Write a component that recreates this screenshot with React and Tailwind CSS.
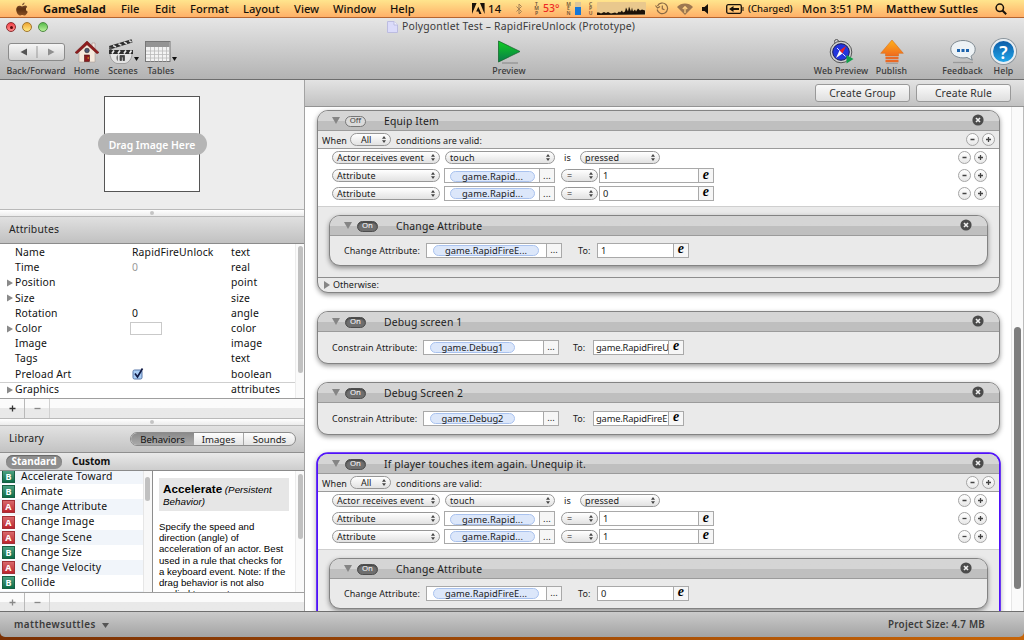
import clsx from "clsx";

const menus = [
  { label: "GameSalad", style: "w-[78px] font-bold tracking-[0.05px]" },
  { label: "File", style: "w-[34px]" },
  { label: "Edit", style: "w-[35px]" },
  { label: "Format", style: "w-[53px]" },
  { label: "Layout", style: "w-[51px]" },
  { label: "View", style: "w-[39px]" },
  { label: "Window", style: "w-[57px]" },
  { label: "Help", style: "w-[82px]" },
];

const attributes = [
  { name: "Name", value: "RapidFireUnlock", type: "text" },
  { name: "Time", value: "0", type: "real", muted: true },
  { name: "Position", type: "point", expandable: true },
  { name: "Size", type: "size", expandable: true },
  { name: "Rotation", value: "0", type: "angle" },
  { name: "Color", type: "color", expandable: true, swatch: true },
  { name: "Image", type: "image" },
  { name: "Tags", type: "text" },
  { name: "Preload Art", type: "boolean", checked: true },
  { name: "Graphics", type: "attributes", expandable: true },
];

const behaviors = [
  { kind: "B", name: "Accelerate Toward" },
  { kind: "B", name: "Animate" },
  { kind: "A", name: "Change Attribute" },
  { kind: "A", name: "Change Image" },
  { kind: "A", name: "Change Scene" },
  { kind: "B", name: "Change Size" },
  { kind: "A", name: "Change Velocity" },
  { kind: "B", name: "Collide" },
  { kind: "B", name: "Constrain Attribute" },
];

function Meter({ letters, style }) {
  return (
    <span className={clsx("flex w-[5px] shrink-0 flex-col items-center text-[5px] font-semibold leading-[4.500px] text-[#6b5238]", style)}>
      {letters.map((l) => (
        <span key={l}>{l}</span>
      ))}
    </span>
  );
}

function MenuBar() {
  return (
    <div className="flex h-[18px] shrink-0 items-center border-b border-[#b5652f] bg-linear-to-b from-[#ffe58d] to-[#ffb068] text-[11.2px] font-medium leading-none text-[#17110a]">
      <svg width="14" height="14" viewBox="0 0 14 14" className="ml-[15px] mr-[14px] shrink-0">
        <defs>
          <linearGradient id="apple" x1="0" y1="0" x2="0" y2="1">
            <stop offset="0" stopColor="#8a6040" />
            <stop offset="0.5" stopColor="#5c3010" />
            <stop offset="1" stopColor="#8b5022" />
          </linearGradient>
        </defs>
        <path
          d="M9.600.500c.1 1.400-1.100 2.800-2.500 2.800C7 2 8.200.700 9.600.500zM12.200 5c-1.900 1.200-1.700 3.700.5 4.700-.6 1.900-1.900 3.800-3.200 3.800-.9 0-1.300-.5-2.300-.5s-1.500.5-2.300.5C3 13.500 1.200 10.200 1.200 7.600c0-2.400 1.500-3.900 3.200-3.900 1.100 0 1.900.7 2.700.7.7 0 1.700-.8 3-.8.8 0 1.600.5 2.100 1.400z"
          fill="url(#apple)"
        />
      </svg>
      {menus.map((m) => (
        <span key={m.label} className={clsx("shrink-0 whitespace-nowrap", m.style)}>
          {m.label}
        </span>
      ))}
      <svg width="13" height="11" viewBox="0 0 13 11" className="shrink-0">
        <path d="M0 0h4.600L0 11zM8 0h4.600v11zM6.300 3.800L9.500 11H7.300L6.400 8.600H4.200z" fill="#17110a" />
      </svg>
      <span className="ml-[3px] w-[26px] tracking-[0.3px]">14</span>
      <svg width="8" height="12" viewBox="0 0 8 12" className="ml-px shrink-0">
        <path d="M1.500 3.500l5 5L4 11V1l2.500 2.500-5 5" fill="none" stroke="#a58356" strokeWidth="1" />
      </svg>
      <Meter letters={["T", "M", "P"]} style="ml-[11px]" />
      <span className="ml-[4px] w-[19px] shrink-0 text-[10.500px] text-[#ed2b24]">53°</span>
      <Meter letters={["M", "E", "N"]} style="ml-[4px]" />
      <span className="ml-[4px] flex h-[13px] w-[6px] shrink-0 flex-col justify-end bg-[#dcc597]">
        <span className="h-[8px] bg-[#1577d8]" />
      </span>
      <Meter letters={["C", "P", "U"]} style="ml-[7px]" />
      <svg width="49" height="13" viewBox="0 0 49 13" className="ml-[4px] shrink-0">
        <rect width="49" height="13" rx="1" fill="#e9c88d" />
        <path
          d="M0 13v-2.500l2 0 2 1 3-1.500 2 1 2-1 3 1.500 4-1 2 1 2-2 1 1 2-2 1 2 2-1 1-4 2 4 1-5 2 5 1-4 1 4 2-2 1 2 2-3 2 2 2-1 3 1v4z"
          fill="#1c1208"
        />
      </svg>
      <svg width="14" height="13" viewBox="0 0 14 13" className="ml-[9px] shrink-0">
        <path d="M2.500 4a5.300 5.300 0 1 1-.4 3.500M.5 3.500l2 2.500 2.600-1.500M7.300 3.500v3.300l2.200 1" fill="none" stroke="#8a6a45" strokeWidth="1.200" />
      </svg>
      <svg width="16" height="12" viewBox="0 0 16 12" className="ml-[8px] shrink-0">
        <path d="M0 4c4.500-4.600 11.500-4.600 16 0l-8 8z" fill="#9c7750" />
        <path d="M8 10V4M5.800 6L8 3.600 10.200 6" fill="none" stroke="#ffd284" strokeWidth="1.300" />
      </svg>
      <svg width="7" height="10" viewBox="0 0 7 10" className="ml-[9px] shrink-0">
        <path d="M6 0v10L2.500 7H0V3h2.500z" fill="#17110a" />
      </svg>
      <svg width="18" height="10" viewBox="0 0 18 10" className="ml-[17px] shrink-0">
        <rect x=".7" y=".7" width="14.600" height="8.600" rx="1.500" fill="none" stroke="#17110a" strokeWidth="1.300" />
        <path d="M16.500 3h1v4h-1zM3 5l4.500-3v2H13v2H7.500v2z" fill="#17110a" />
      </svg>
      <span className="ml-[4px] w-[54px] shrink-0 whitespace-nowrap text-[9.500px]">(Charged)</span>
      <span className="w-[84px] shrink-0 whitespace-nowrap tracking-[0.15px]">Mon 3:51 PM</span>
      <span className="w-[109px] shrink-0 whitespace-nowrap font-semibold tracking-[0.2px]">Matthew Suttles</span>
      <svg width="12" height="12" viewBox="0 0 12 12" className="shrink-0">
        <circle cx="4.800" cy="4.800" r="3.700" fill="none" stroke="#17110a" strokeWidth="1.500" />
        <path d="M7.500 7.500l3.700 3.700" stroke="#17110a" strokeWidth="2" />
      </svg>
    </div>
  );
}

function HomeIcon() {
  return (
    <svg width="24" height="24" viewBox="0 0 24 24">
      <path d="M4 11l8-8 8 8v11H4z" fill="#f5e9dc" stroke="#a39388" strokeWidth=".5" />
      <path d="M17 3h3v6l-3-3z" fill="#f1e7e2" stroke="#a2837d" strokeWidth=".5" />
      <path d="M0 12.500L12 1l12 11.500-2 1.200L12 4.800 2 13.700z" fill="#8e1b1d" stroke="#61100f" strokeWidth=".5" />
      <circle cx="12" cy="10.500" r="2.300" fill="#4b5572" stroke="#222" strokeWidth=".6" />
      <rect x="9.500" y="15" width="5" height="6.500" fill="#8e1b1d" stroke="#4d0d0d" strokeWidth=".6" />
      <circle cx="13.200" cy="18" r=".7" fill="#edc229" />
    </svg>
  );
}

function ScenesIcon() {
  return (
    <svg width="26" height="26" viewBox="0 0 26 26">
      <path d="M2 14.500h22c0 5-3 9-7 10H9c-4-1-7-5-7-10z" fill="#e4e4e4" stroke="#8a8a8a" strokeWidth=".7" />
      <path d="M9.500 16.500c-.8 1.500-.5 3.500 0 5M12 16.500h4.500v5h-1.500v-3.500h-1.500v3.500H12z" fill="#444" stroke="#444" strokeWidth=".8" />
      <path d="M1 7L23.500.300l1 3.200L2 10.500z" fill="#2d2d2d" />
      <path d="M5 6.500l3 1.500M10.500 4.800l3 1.600M16 3.100l3 1.600M21 1.600l2.500 1.400" stroke="#ddd" strokeWidth="1.600" />
      <path d="M1 11h24v4H1z" fill="#2d2d2d" />
      <path d="M6 11.500l-2 3M12 11.500l-2 3M18 11.500l-2 3M23.500 11.500l-2 3" stroke="#eee" strokeWidth="1.700" />
      <circle cx="2.500" cy="9.500" r="1.500" fill="#555" />
    </svg>
  );
}

function TablesIcon() {
  return (
    <svg width="26" height="21" viewBox="0 0 26 21">
      <rect x=".5" y=".5" width="24.500" height="20" fill="#f3f3f3" stroke="#777" />
      <rect x="1" y="1" width="23.500" height="5" fill="#949494" />
      <path d="M1 10h24M1 13.500h24M1 17h24M5.500 6v14.500M9.500 6v14.500M13.500 6v14.500M17.500 6v14.500M21.500 6v14.500" stroke="#b9b9b9" strokeWidth=".8" />
    </svg>
  );
}

function CompassIcon() {
  return (
    <svg width="25" height="25" viewBox="0 0 25 25">
      <circle cx="7.500" cy="2.500" r="2" fill="none" stroke="#555" />
      <circle cx="12" cy="13" r="10.800" fill="#cfcfcf" stroke="#555" />
      <circle cx="12" cy="13" r="8.300" fill="#2335dd" stroke="#171b57" />
      <path d="M17 7l-3.500 7.500-3-3z" fill="#ee2222" />
      <path d="M7 19l3.500-7.500 3 3z" fill="#fff" />
      <path d="M8 9l2.500 2.500M16.500 17.500L13.500 14.500" stroke="#dfe4ff" />
      <path d="M17.500 16l7 4-7 4.500z" fill="#12a04a" />
    </svg>
  );
}

function PublishIcon() {
  return (
    <svg width="24" height="25" viewBox="0 0 24 25">
      <defs>
        <linearGradient id="publish" x1="0" y1="0" x2="0" y2="1">
          <stop offset="0" stopColor="#ffb21c" />
          <stop offset="1" stopColor="#f06a1d" />
        </linearGradient>
      </defs>
      <path d="M12 1l11.300 13.300H18.500V17h-13v-2.700H.700z" fill="url(#publish)" stroke="#d8701c" strokeWidth=".6" />
      <path d="M5.500 18h13v2.200h-13zM5.500 21h13v2.200h-13z" fill="#ea6a26" />
      <path d="M6 24.300h12" stroke="#999" />
    </svg>
  );
}

function FeedbackIcon() {
  return (
    <svg width="26" height="25" viewBox="0 0 26 25">
      <path d="M3 23.500h20" stroke="#9a9a9a" strokeWidth="1.300" />
      <path
        d="M13 1.500c7 0 12.200 3.700 12.200 8.700 0 3.200-1.700 5.500-4.200 7l1.300 4-5.300-2.700c-1.300.3-2.600.4-4 .4C6 18.900.800 15.200.800 10.200S6 1.500 13 1.500z"
        fill="#edf2f5"
        stroke="#7f8a92"
      />
      <path d="M7 10h3v3H7zM11.500 10h3v3h-3zM16 10h3v3h-3z" fill="#1b63ae" />
    </svg>
  );
}

function HelpIcon() {
  return (
    <div className="flex size-[25px] items-center justify-center rounded-full border-2 border-[#e8eef3] bg-linear-to-b from-[#0f5da8] to-[#20a5e8] text-[18px] font-semibold leading-none text-white shadow-[0_0_0_1px_#8b969e]">
      ?
    </div>
  );
}

function ToolItem({ label, style, children }) {
  return (
    <div className={clsx("flex shrink-0 flex-col items-center", style)}>
      <div className="flex h-[27px] items-center justify-center">{children}</div>
      <span className="whitespace-nowrap text-[8.800px] leading-[12px] tracking-[0.080px]">{label}</span>
    </div>
  );
}

function Caret() {
  return (
    <svg width="5" height="4" viewBox="0 0 5 4" className="mt-[14px] shrink-0">
      <path d="M0 0h5L2.500 4z" fill="#111" />
    </svg>
  );
}

function WindowHeader() {
  return (
    <div className="flex h-[62px] shrink-0 flex-col border-b border-[#6d6d6d] bg-linear-to-b from-[#e6e6e6] to-[#b3b3b3] font-medium text-[#3a3a3a]">
      <div className="flex h-[18px] items-center">
        <div className="ml-[6px] flex w-[380px] shrink-0 gap-[6px]">
          <span className="flex size-[10px] items-center justify-center rounded-full border border-[#8c2c2f] bg-linear-to-b from-[#f23c46] to-[#ff8b8b]">
            <span className="size-[3px] rounded-full bg-[#5e0609]" />
          </span>
          <span className="size-[10px] rounded-full border border-[#a1752b] bg-linear-to-b from-[#eea52d] to-[#ffeb84]" />
          <span className="size-[10px] rounded-full border border-[#4f8a43] bg-linear-to-b from-[#57bb4a] to-[#b8f299]" />
        </div>
        <svg width="11" height="12" viewBox="0 0 11 12" className="ml-[1px] shrink-0">
          <path d="M.5.500h6.500l3.500 3.500v7.500H.500z" fill="#dbdbfa" stroke="#bcbce0" />
          <path d="M7 .500v3.500h3.500" fill="#f2f2ff" stroke="#bcbce0" />
        </svg>
        <span className="ml-[4px] whitespace-nowrap text-[10.400px] font-normal tracking-[0.180px]">
          Polygontlet Test – RapidFireUnlock (Prototype)
        </span>
      </div>
      <div className="flex pt-[2px]">
        <ToolItem label="Back/Forward" style="ml-[7px] w-[58px]">
          <div className="flex h-[18px] w-[57px] items-center rounded-[3px] border border-[#8b8b8b] bg-linear-to-b from-[#f5f5f5] to-[#d2d2d2]">
            <svg width="55" height="16" viewBox="0 0 55 16">
              <path d="M18 4.500v7L11.500 8z" fill="#555" />
              <path d="M28 2v12" stroke="#999" />
              <path d="M39 4.500v7L45.500 8z" fill="#8f8f8f" />
            </svg>
          </div>
        </ToolItem>
        <ToolItem label="Home" style="ml-[9px] w-[25px]">
          <HomeIcon />
        </ToolItem>
        <ToolItem label="Scenes" style="ml-[9px] w-[30px]">
          <div className="ml-[1px] flex items-center">
            <ScenesIcon />
            <Caret />
          </div>
        </ToolItem>
        <ToolItem label="Tables" style="ml-[8px] w-[30px]">
          <div className="flex items-center gap-px">
            <TablesIcon />
            <Caret />
          </div>
        </ToolItem>
        <ToolItem label="Preview" style="ml-[316px] w-[34px]">
          <svg width="24" height="24" viewBox="0 0 24 24">
            <defs>
              <linearGradient id="play" x1="0" y1="0" x2="0" y2="1">
                <stop offset="0" stopColor="#10cf20" />
                <stop offset="1" stopColor="#087a4b" />
              </linearGradient>
            </defs>
            <path d="M5 23h16" stroke="#999" strokeWidth="1.500" />
            <path d="M1.500 1v21L23 11.500z" fill="url(#play)" stroke="#176a2e" strokeWidth=".8" />
          </svg>
        </ToolItem>
        <ToolItem label="Web Preview" style="ml-[288px] w-[54px]">
          <CompassIcon />
        </ToolItem>
        <ToolItem label="Publish" style="ml-[8px] w-[31px]">
          <PublishIcon />
        </ToolItem>
        <ToolItem label="Feedback" style="ml-[36px] w-[39px]">
          <FeedbackIcon />
        </ToolItem>
        <ToolItem label="Help" style="ml-[9px] w-[25px]">
          <HelpIcon />
        </ToolItem>
      </div>
    </div>
  );
}

function Splitter() {
  return (
    <div className="flex h-[8px] shrink-0 items-center justify-center border-y border-[#b9b9b9] bg-linear-to-b from-white to-[#ececec]">
      <span className="size-[4px] rounded-full bg-[#c4c4c4]" />
    </div>
  );
}

function AddRemoveBar({ style }) {
  return (
    <div className={clsx("flex shrink-0 border-t border-[#9f9f9f] bg-linear-to-b from-[#fbfbfb] from-50% to-[#e9e9e9] to-50%", style)}>
      <span className="flex w-[25px] items-center justify-center border-r border-[#b9b9b9]">
        <svg width="7" height="7" viewBox="0 0 7 7">
          <path d="M3.500.500v6M.500 3.500h6" stroke="currentColor" strokeWidth="1.300" />
        </svg>
      </span>
      <span className="flex w-[25px] items-center justify-center border-r border-[#d0d0d0]">
        <svg width="7" height="7" viewBox="0 0 7 7">
          <path d="M.500 3.500h6" stroke="#888" strokeWidth="1.300" />
        </svg>
      </span>
    </div>
  );
}

function AttributeTable() {
  return (
    <div className="flex h-[154px] shrink-0 bg-white">
      <div className="flex-1 pt-[1px] text-[10.400px] leading-[15.200px] tracking-[0.150px] text-[#111]">
        {attributes.map((a) => (
          <div key={a.name} className={clsx("flex h-[15.200px] items-center", a.name === "Graphics" && "border-t border-[#cfcfcf]")}>
            <span className="flex w-[15px] shrink-0 justify-end pr-[2px]">
              {a.expandable && (
                <svg width="6" height="8" viewBox="0 0 6 8">
                  <path d="M0 .500v7L6 4z" fill="#8a8a8a" />
                </svg>
              )}
            </span>
            <span className="w-[117px] shrink-0">{a.name}</span>
            <span className={clsx("w-[99px] shrink-0 whitespace-nowrap", a.muted && "text-[#999]")}>
              {a.value}
              {a.swatch && <span className="-ml-[2px] block h-[13px] w-[32px] border border-[#c9c9c9] bg-white" />}
              {a.checked && (
                <svg width="12" height="13" viewBox="0 0 12 13" className="mb-[2px]">
                  <rect x="1" y="3" width="9" height="9" rx="1.500" fill="#a9cdf5" stroke="#5877a8" />
                  <path d="M3 6.500l2.500 3.500L10.500 1.500" fill="none" stroke="#101a45" strokeWidth="1.700" />
                </svg>
              )}
            </span>
            <span>{a.type}</span>
          </div>
        ))}
      </div>
      <div className="w-[9px] border-l border-[#ececec] bg-[#fafafa] pl-[2px] pt-[2px]">
        <div className="h-[127px] w-[5px] rounded-full bg-[#c1c1c1]" />
      </div>
    </div>
  );
}

function Library() {
  return (
    <>
      <div className="flex h-[27px] shrink-0 items-center border-b border-[#8f8f8f] bg-linear-to-b from-[#e2e2e2] to-[#c3c3c3] text-[10.400px] text-[#222]">
        <span className="ml-[9px] w-[121px] tracking-[0.150px]">Library</span>
        <div className="flex h-[14px] w-[166px] overflow-hidden rounded-full border border-[#8c8c8c] bg-linear-to-b from-[#fdfdfd] to-[#e4e4e4] text-[9.600px] leading-[13px]">
          <span className="w-[63px] bg-linear-to-b from-[#8b8b8b] to-[#aaa] text-center text-[#111]">Behaviors</span>
          <span className="w-[50px] border-r border-[#a6a6a6] text-center">Images</span>
          <span className="flex-1 text-center">Sounds</span>
        </div>
      </div>
      <div className="flex h-[18px] shrink-0 items-center border-b border-[#8a8a8a] bg-linear-to-b from-[#e9e9e9] to-[#cdcdcd] text-[10px] font-bold">
        <span className="ml-[6px] flex h-[14px] w-[56px] items-center justify-center rounded-full bg-[#8e8e8e] text-white shadow-[inset_0_1px_1px_#666]">
          Standard
        </span>
        <span className="ml-[10px] text-[#111]">Custom</span>
      </div>
      <div className="flex h-[121px] shrink-0 overflow-hidden bg-white">
        <div className="-mt-[2px] w-[143px] shrink-0 text-[10.400px] tracking-[0.160px] text-[#111]">
          {behaviors.map((b) => (
            <div key={b.name} className="flex h-[15.200px] items-center odd:bg-[#f1f5fa]">
              <span
                className={clsx(
                  "ml-[2px] flex size-[13px] shrink-0 items-center justify-center border text-[9px] font-bold leading-none text-white",
                  b.kind === "A" ? "border-[#a33037] bg-linear-to-b from-[#d8686d] to-[#bd222e]" : "border-[#175f43] bg-linear-to-b from-[#4ca183] to-[#0b6d48]"
                )}
              >
                {b.kind}
              </span>
              <span className="ml-[6px] whitespace-nowrap">{b.name}</span>
            </div>
          ))}
        </div>
        <div className="w-[10px] shrink-0 border-l border-r border-l-[#e6e6e6] border-r-[#8d8d8d] bg-[#f8f8f8] pl-[1px] pt-[6px]">
          <div className="h-[24px] w-[5px] rounded-full bg-[#c1c1c1]" />
        </div>
        <div className="w-[142px] shrink-0 pl-[6px] pt-[7px] font-['Liberation_Sans',sans-serif] text-black">
          <div className="h-[33px] w-[130px] bg-[#e6e6e6] px-[4px] pt-[5px] text-[9.800px] italic leading-[11.500px]">
            <span className="text-[11.700px] font-bold not-italic">Accelerate</span> (Persistent Behavior)
          </div>
          <p className="mt-[10px] w-[133px] whitespace-nowrap text-[9.650px] leading-[11.200px]">
            Specify the speed and
            <br />
            direction (angle) of
            <br />
            acceleration of an actor. Best
            <br />
            used in a rule that checks for
            <br />
            a keyboard event. Note: If the
            <br />
            drag behavior is not also
            <br />
            applied to an actor,
          </p>
        </div>
        <div className="flex-1 border-l border-[#ececec] bg-[#fafafa] pl-[2px] pt-[3px]">
          <div className="h-[65px] w-[5px] rounded-full bg-[#c1c1c1]" />
        </div>
      </div>
      <AddRemoveBar style="h-[19px] text-[#888]" />
    </>
  );
}

function Sidebar() {
  return (
    <div className="flex w-[305px] shrink-0 flex-col border-r border-[#a3a3a3] bg-[#ededed]">
      <div className="flex h-[129px] shrink-0 flex-col items-center pt-[16px]">
        <div className="flex h-[96px] w-[96px] flex-col items-center justify-center border border-[#555] bg-white">
          <span className="flex h-[22px] w-[109px] shrink-0 items-center justify-center rounded-full bg-[#b5b5b5] pt-[3px] text-[10.400px] font-semibold text-white">
            Drag Image Here
          </span>
        </div>
      </div>
      <Splitter />
      <div className="flex h-[27px] shrink-0 items-center border-b border-[#8b8b8b] bg-linear-to-b from-[#e0e0e0] to-[#c1c1c1] pl-[9px] text-[10.400px] tracking-[0.150px] text-[#222]">
        Attributes
      </div>
      <AttributeTable />
      <AddRemoveBar style="h-[20px] text-[#333]" />
      <Splitter />
      <Library />
    </div>
  );
}

function Select({ children, style }) {
  return (
    <span
      className={clsx(
        "flex shrink-0 items-center justify-between whitespace-nowrap rounded-full border border-[#979797] bg-linear-to-b from-white to-[#e2e2e2] pr-[4px] text-[9px] leading-none",
        style
      )}
    >
      <span>{children}</span>
      <svg width="4" height="7" viewBox="0 0 4 7">
        <path d="M0 2.800h4L2 0zM0 4.200h4L2 7z" fill="#444" />
      </svg>
    </span>
  );
}

function AttributeField({ pill, style, pillStyle }) {
  return (
    <span className={clsx("flex h-[15px] shrink-0 border border-[#a9a9a9] bg-white text-[9.300px] leading-none", style)}>
      <span className="flex flex-1 items-center">
        <span className={clsx("mt-px flex h-[11px] items-center justify-center rounded-full border border-[#a9c2ee] bg-[#dce7fa]", pillStyle)}>
          {pill}
        </span>
      </span>
      <span className="flex w-[15px] items-center justify-center border-l border-[#a9a9a9] bg-[#f6f6f6]">...</span>
    </span>
  );
}

function ExpressionField({ value, style }) {
  return (
    <span className={clsx("flex h-[15px] shrink-0 border border-[#a9a9a9] bg-white text-[9.300px] leading-[14px]", style)}>
      <span className="flex-1 overflow-hidden whitespace-nowrap">{value}</span>
      <span className="flex w-[15px] shrink-0 items-center justify-center border-l border-[#a9a9a9] bg-[#f6f6f6] pb-[2px] font-['Liberation_Serif',serif] text-[14px] font-bold italic leading-[10px] text-black">
        e
      </span>
    </span>
  );
}

function RoundButtons({ style }) {
  return (
    <span className={clsx("ml-auto flex gap-[3px]", style)}>
      {["M3.500 5.500h4", "M3 5.500h5M5.500 3v5"].map((d) => (
        <span key={d} className="flex size-[13px] items-center justify-center rounded-full border border-[#a5a5a5] bg-linear-to-b from-white to-[#e8e8e8]">
          <svg width="11" height="11" viewBox="0 0 11 11">
            <path d={d} stroke="#444" strokeWidth="1.300" />
          </svg>
        </span>
      ))}
    </span>
  );
}

function CardHeader({ title, off }) {
  return (
    <div className="flex h-[20px] shrink-0 items-center border-b border-[#9b9b9b] bg-linear-to-b from-[#d5d5d5] from-52% to-[#bfbfbf] to-52%">
      <svg width="8" height="7" viewBox="0 0 8 7" className="ml-[14px] shrink-0">
        <path d="M0 0h8L4 7z" fill="#858585" />
      </svg>
      <span
        className={clsx(
          "ml-[5px] mt-px flex h-[11px] w-[21px] shrink-0 items-center justify-center rounded-full border text-[7.800px] leading-none",
          off ? "border-[#777] bg-[#dadada] text-[#444]" : "border-[#4d4d4d] bg-[#6e6e6e] text-white shadow-[inset_0_1px_1px_#444]"
        )}
      >
        {off ? "Off" : "On"}
      </span>
      <span className="ml-[18px] mt-[2px] whitespace-nowrap text-[10.400px] leading-none tracking-[0.160px] text-[#1c1c1c]">{title}</span>
      <svg width="12" height="12" viewBox="0 0 12 12" className="mb-px ml-auto mr-[15px] shrink-0">
        <circle cx="6" cy="6" r="5.600" fill="#4b4b4b" />
        <path d="M4 4l4 4M8 4L4 8" stroke="#eee" strokeWidth="1.600" />
      </svg>
    </div>
  );
}

function Card({ title, off, selected, style, children }) {
  return (
    <div
      className={clsx(
        "flex shrink-0 flex-col overflow-hidden rounded-[11px] border bg-[#eaeaea]",
        selected
          ? "border-[#4f10fa] shadow-[0_0_0_0.8px_#4f10fa,0_2px_6px_rgba(0,0,0,0.4)]"
          : "border-[#838383] shadow-[0_2px_5px_rgba(0,0,0,0.4)]",
        style
      )}
    >
      <CardHeader title={title} off={off} />
      {children}
    </div>
  );
}

function Rule({ title, off, values, target, otherwise, selected }) {
  return (
    <Card title={title} off={off} selected={selected} style="h-[183px]">
      <div className="flex h-[18px] shrink-0 items-center border-b border-[#9b9b9b] pl-[4px] text-[9px] leading-none">
        <span className="mt-px w-[28px] tracking-[0.1px]">When</span>
        <Select style="h-[13px] w-[41px] pl-[10px]">All</Select>
        <span className="ml-[5px] mt-px whitespace-nowrap tracking-[0.060px]">conditions are valid:</span>
        <RoundButtons style="mr-[4px]" />
      </div>
      <div className="flex h-[58px] shrink-0 flex-col border-b border-[#cfcfcf] bg-white text-[9px] leading-none tracking-[0.1px]">
        <div className="flex h-[17px] items-center pl-[14px]">
          <Select style="h-[13px] w-[108px] pl-[4px]">Actor receives event</Select>
          <Select style="ml-[5px] h-[13px] w-[110px] pl-[4px]">touch</Select>
          <span className="w-[25px] text-center">is</span>
          <Select style="h-[13px] w-[80px] pl-[4px]">pressed</Select>
          <RoundButtons style="mr-[12px]" />
        </div>
        <div className="flex flex-col pt-px">
          {values.map((v, idx) => (
            <div key={idx} className="flex h-[17.600px] items-center pl-[14px]">
              <Select style="h-[13px] w-[108px] pl-[4px]">Attribute</Select>
              <AttributeField pill="game.Rapid..." style="ml-[4px] w-[111px]" pillStyle="ml-[5px] w-[85px]" />
              <Select style="ml-[6px] h-[13px] w-[37px] pl-[5px]">=</Select>
              <ExpressionField value={v} style="ml-[1px] w-[115px] pl-[3px]" />
              <RoundButtons style="mr-[12px]" />
            </div>
          ))}
        </div>
      </div>
      <div className="flex h-[70px] shrink-0 flex-col px-[11px] pt-[8px]">
        <Card title="Change Attribute" style="h-[51px]">
          <div className="flex flex-1 items-center pb-px pl-[14px] text-[9px] leading-none tracking-[0.060px]">
            <span className="w-[82px] whitespace-nowrap">Change Attribute:</span>
            <AttributeField pill="game.RapidFireE..." style="w-[136px]" pillStyle="ml-[6px] w-[106px]" />
            <span className="ml-[16px] w-[19px]">To:</span>
            <ExpressionField value={target} style="w-[92px] pl-[3px]" />
          </div>
        </Card>
      </div>
      {otherwise && (
        <div className="flex flex-1 items-center border-t border-[#8d8d8d] pb-px pl-[6px] text-[9px] leading-none">
          <svg width="6" height="8" viewBox="0 0 6 8">
            <path d="M0 0v8L6 4z" fill="#858585" />
          </svg>
          <span className="ml-[3px]">Otherwise:</span>
        </div>
      )}
    </Card>
  );
}

function ConstrainCard({ title, attribute, value }) {
  return (
    <Card title={title} style="h-[53px]">
      <div className="flex flex-1 items-center pb-px pl-[14px] text-[9px] leading-none">
        <span className="w-[91px] whitespace-nowrap tracking-[0.100px]">Constrain Attribute:</span>
        <AttributeField pill={attribute} style="w-[136px]" pillStyle="ml-[6px] w-[85px]" />
        <span className="ml-[14px] w-[20px]">To:</span>
        <ExpressionField value={value} style="w-[91px] pl-[2px] tracking-[-0.15px]" />
      </div>
    </Card>
  );
}

function Editor() {
  return (
    <div className="flex min-w-0 flex-1 flex-col">
      <div className="flex h-[27px] shrink-0 items-center justify-end gap-[6px] border-b border-[#939393] bg-linear-to-b from-[#e3e3e3] to-[#c2c2c2] pr-[13px] text-[10.400px] leading-none tracking-[0.1px] text-[#333]">
        <button className="h-[18px] w-[95px] rounded-[3px] border border-[#999] bg-linear-to-b from-[#fafafa] to-[#dfdfdf] pt-px">
          Create Group
        </button>
        <button className="h-[18px] w-[95px] rounded-[3px] border border-[#999] bg-linear-to-b from-[#fafafa] to-[#dfdfdf] pt-px">
          Create Rule
        </button>
      </div>
      <div className="flex min-h-0 flex-1">
        <div className="flex min-w-0 flex-1 flex-col overflow-hidden bg-white pl-[12px] pr-[11px] pt-[3px] text-[#1a1a1a]">
          <Rule title="Equip Item" off values={["1", "0"]} target="1" otherwise />
          <div className="flex flex-col gap-[18px] py-[18px]">
            <ConstrainCard title="Debug screen 1" attribute="game.Debug1" value="game.RapidFireU" />
            <ConstrainCard title="Debug Screen 2" attribute="game.Debug2" value="game.RapidFireE" />
          </div>
          <Rule title="If player touches item again. Unequip it." values={["1", "1"]} target="0" selected />
        </div>
        <div className="w-[13px] shrink-0 border-l border-r border-l-[#e6e6e6] border-r-[#bbb] bg-[#fafafa] pl-[2px] pt-[220px]">
          <div className="h-[262px] w-[7px] rounded-full bg-[#7e7e7e]" />
        </div>
      </div>
    </div>
  );
}

export default function App() {
  return (
    <div className="flex h-[640px] w-[1024px] flex-col overflow-hidden bg-linear-to-r from-[#7a3004] to-[#c76508] font-['Noto_Sans','Open_Sans',sans-serif]">
      <MenuBar />
      <WindowHeader />
      <div className="flex h-[531px] shrink-0 overflow-hidden bg-white">
        <Sidebar />
        <Editor />
      </div>
      <div className="flex h-[26px] shrink-0 items-center justify-between rounded-b-[5px] border-t border-[#6f6f6f] bg-linear-to-b from-[#cbcbcb] to-[#a3a3a3] pl-[14px] pr-[39px] pt-px text-[9.800px] font-semibold tracking-[0.250px] text-[#3b3b3b]">
        <span className="flex items-center gap-[6px] tracking-[0.450px]">
          matthewsuttles
          <svg width="7" height="5" viewBox="0 0 7 5">
            <path d="M0 0h7L3.500 5z" fill="#555" />
          </svg>
        </span>
        <span>Project Size: 4.7 MB</span>
      </div>
    </div>
  );
}
